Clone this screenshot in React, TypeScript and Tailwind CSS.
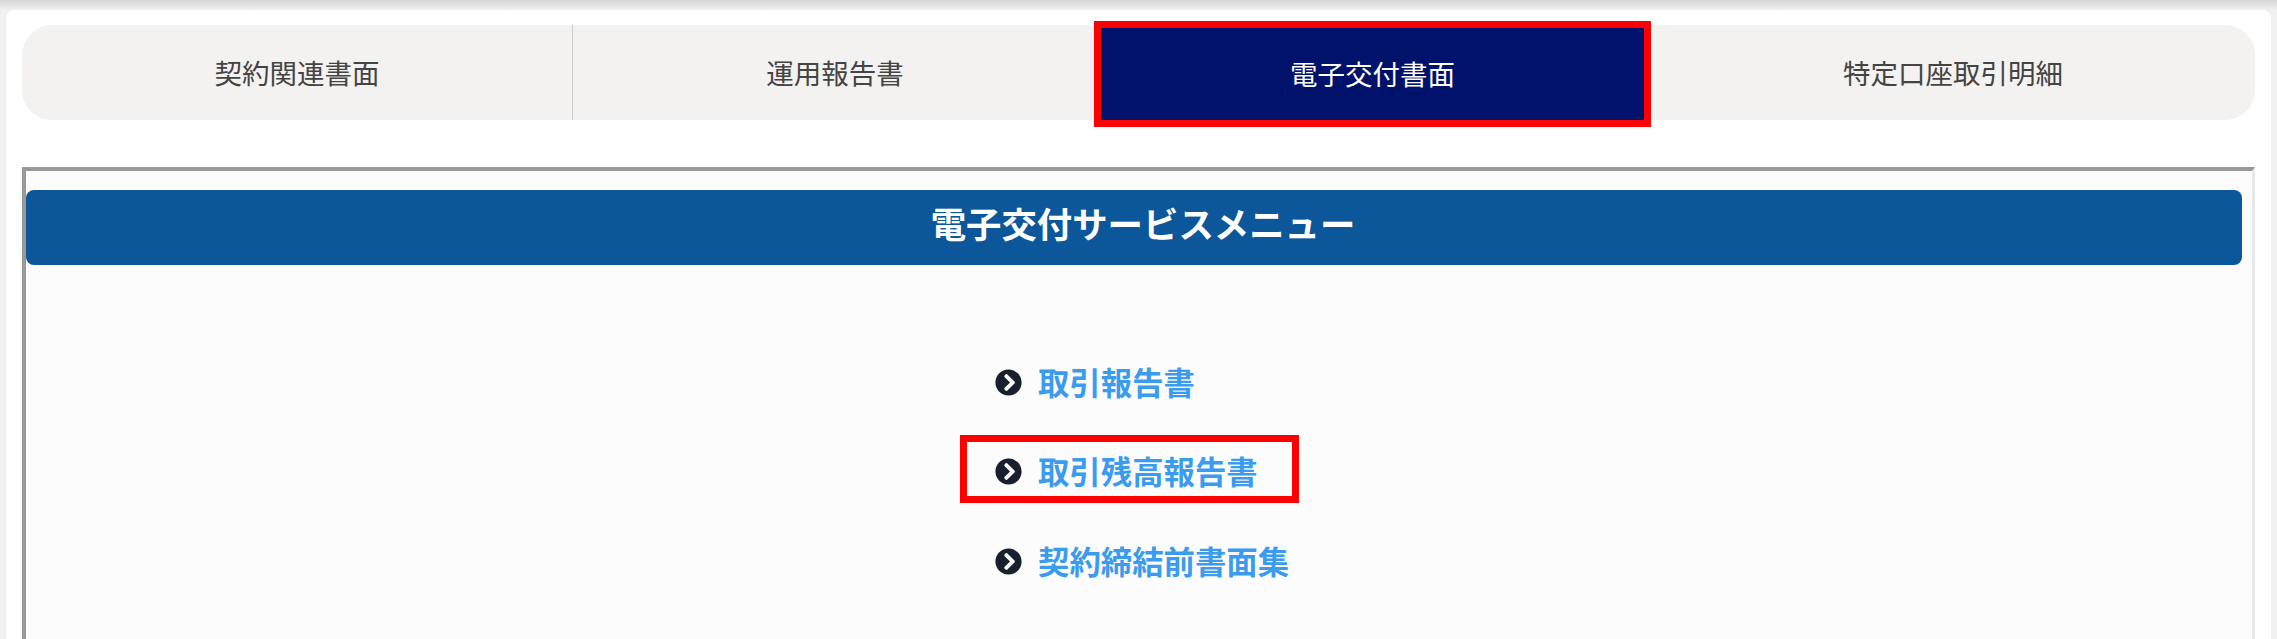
import React from 'react';
import { FaChevronCircleRight } from 'react-icons/fa';

const fontStack = '[font-family:"Noto_Sans_CJK_JP","Liberation_Sans",sans-serif]';

const links = [
  { label: '取引報告書', rowClass: 'mt-[88px]' },
  { label: '取引残高報告書', rowClass: 'mt-[35px] -ml-[28px] pl-[28px] w-[325px] outline-[7px] outline-solid outline-[#ff0000]' },
  { label: '契約締結前書面集', rowClass: 'mt-[36px]' },
];

const App: React.FC = () => {
  return (
    <div className={`h-[639px] w-full overflow-hidden flex flex-col bg-[#f0f0f0] ${fontStack}`}>
      {/* 上部の影 */}
      <div className="h-[10px] shrink-0 bg-gradient-to-b from-[#d6d6d6] to-[#f0f0f0]" />

      <div className="flex-1 mx-[6px] flex flex-col bg-white rounded-t-lg px-4 pt-[15px]">
        {/* タブ */}
        <div className="grid grid-cols-[551px_528px_543px_611px] h-[95px] shrink-0 bg-[#f3f2f0] rounded-[30px] text-[27.5px] text-[#444444]">
          <div className="flex items-center justify-center border-r border-[#cccccc]">契約関連書面</div>
          <div className="flex items-center justify-center pr-1">運用報告書</div>
          <div className="mt-[3px] flex items-center justify-center bg-[#00126a] text-white outline-[7px] outline-solid outline-[#ff0000]">
            電子交付書面
          </div>
          <div className="flex items-center justify-center pl-[7px]">特定口座取引明細</div>
        </div>

        {/* 電子交付サービスメニュー */}
        <div className="flex-1 mt-[47px] flex flex-col bg-[#fcfcfc] border-t-4 border-l-4 border-r-[3px] border-t-[#999999] border-l-[#999999] border-r-[#e9e9e9] pt-[19px] pr-[10px]">
          <div className="h-[75px] shrink-0 flex items-center justify-center pb-[10px] pl-[18px] rounded-lg bg-[#0c5799] text-white text-[35.4px] font-bold">
            電子交付サービスメニュー
          </div>

          <ul className="w-[278px] mx-auto">
            {links.map((link) => (
              <li
                key={link.label}
                className={`h-[54px] pt-[4px] flex items-center gap-4 whitespace-nowrap text-[31.4px] font-bold text-[#3a9bef] ${link.rowClass}`}
              >
                <FaChevronCircleRight className="w-[27px] h-[27px] shrink-0 text-[#18202e]" />
                <span>{link.label}</span>
              </li>
            ))}
          </ul>
        </div>
      </div>
    </div>
  );
};

export default App;
